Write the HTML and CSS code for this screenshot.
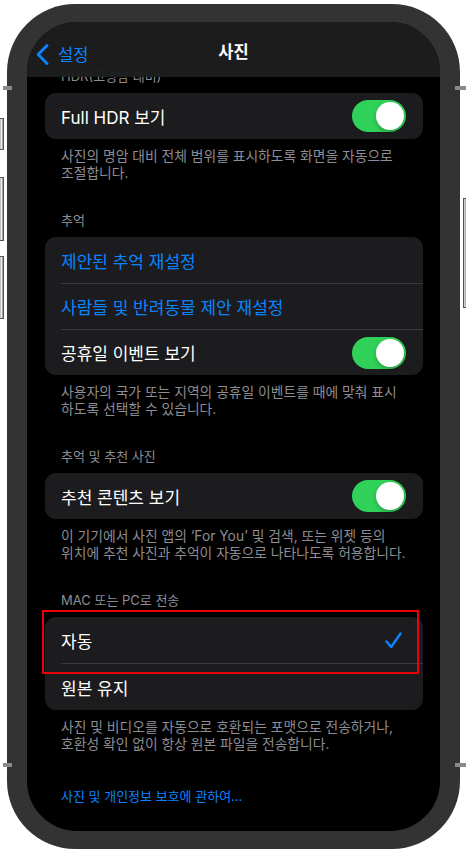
FILE: index.html
```html
<!DOCTYPE html>
<html lang="ko">
<head>
  <meta charset="UTF-8">
  <title>사진 설정</title>
  <link rel="stylesheet" href="styles.css">
</head>
<body>

  <div class="device">
    <!-- side buttons -->
    <span class="btn btn-mute"></span>
    <span class="btn btn-vol-up"></span>
    <span class="btn btn-vol-down"></span>
    <span class="btn btn-power"></span>
    <span class="tick tick-tl"></span>
    <span class="tick tick-tr"></span>
    <span class="tick tick-bl"></span>
    <span class="tick tick-br"></span>

    <div class="screen">
      <div class="navbar">
        <a class="back" href="#">
          <svg width="13" height="21" viewBox="0 0 13 21">
            <path d="M11 1.5 L2.2 10.5 L11 19.5" fill="none" stroke="#0a84ff" stroke-width="2.8" stroke-linecap="round" stroke-linejoin="round"/>
          </svg>
          <span>설정</span>
        </a>
        <div class="title">사진</div>
      </div>

      <div class="content">
        <div class="group-header">HDR(고명암 대비)</div>
        <div class="card">
          <div class="row">
            <div class="row-inner">
              <span>Full HDR 보기</span>
              <span class="toggle on"></span>
            </div>
          </div>
        </div>
        <div class="desc">사진의 명암 대비 전체 범위를 표시하도록 화면을 자동으로<br>조절합니다.</div>

        <div class="group-header">추억</div>
        <div class="card">
          <div class="row">
            <div class="row-inner link-text">제안된 추억 재설정</div>
          </div>
          <div class="row">
            <div class="row-inner link-text">사람들 및 반려동물 제안 재설정</div>
          </div>
          <div class="row">
            <div class="row-inner">
              <span>공휴일 이벤트 보기</span>
              <span class="toggle on"></span>
            </div>
          </div>
        </div>
        <div class="desc">사용자의 국가 또는 지역의 공휴일 이벤트를 때에 맞춰 표시<br>하도록 선택할 수 있습니다.</div>

        <div class="group-header">추억 및 추천 사진</div>
        <div class="card">
          <div class="row">
            <div class="row-inner">
              <span>추천 콘텐츠 보기</span>
              <span class="toggle on"></span>
            </div>
          </div>
        </div>
        <div class="desc">이 기기에서 사진 앱의 ‘For You’ 및 검색, 또는 위젯 등의<br>위치에 추천 사진과 추억이 자동으로 나타나도록 허용합니다.</div>

        <div class="group-header">MAC 또는 PC로 전송</div>
        <div class="card">
          <div class="row">
            <div class="row-inner">
              <span>자동</span>
              <svg class="check" width="17" height="17" viewBox="0 0 17 17">
                <path d="M1.5 9.5 L6.2 15 L15.5 1.5" fill="none" stroke="#0a84ff" stroke-width="2.4" stroke-linecap="round" stroke-linejoin="round"/>
              </svg>
            </div>
          </div>
          <div class="row tall">
            <div class="row-inner">원본 유지</div>
          </div>
          <div class="highlight"></div>
        </div>
        <div class="desc">사진 및 비디오를 자동으로 호환되는 포맷으로 전송하거나,<br>호환성 확인 없이 항상 원본 파일을 전송합니다.</div>

        <a class="footer-link" href="#">사진 및 개인정보 보호에 관하여...</a>
      </div>
    </div>
  </div>

</body>
</html>
```

FILE: styles.css
```css
body {
  margin: 0;
  padding: 0;
  background-color: white;
  font-family: Inter, "Noto Sans CJK KR", sans-serif;
}

.device {
  position: relative;
  width: 453px;
  height: 845px;
  margin: 4px 0 0 7px;
  padding: 18px 20px;
  box-sizing: border-box;
  background-color: #333;
  border-radius: 68px;
}

/* hardware buttons and little marks round the frame */
.btn {
  position: absolute;
  width: 3px;
  border: 1px solid #555;
  border-left: none;
  background: linear-gradient(to right, #aaa, #f2f2f2 50%, #777);
}

.btn-mute { left: -7px; top: 114px; height: 30px; }
.btn-vol-up { left: -7px; top: 173px; height: 62px; }
.btn-vol-down { left: -7px; top: 252px; height: 61px; }
.btn-power { right: -6px; top: 194px; height: 108px; width: 2px; border-right: none; border-left: 1px solid #555; }

.tick {
  position: absolute;
  width: 9px;
  height: 4px;
  background-color: #8a8a8a;
}

.tick-tl { left: -4px; top: 82px; }
.tick-bl { left: -4px; top: 759px; }
.tick-tr { right: -6px; top: 82px; width: 11px; }
.tick-br { right: -6px; top: 759px; width: 11px; }

.screen {
  position: relative;
  height: 809px;
  background-color: #000;
  border-radius: 50px;
  overflow: hidden;
}

.navbar {
  position: absolute;
  top: 0;
  left: 0;
  right: 0;
  height: 55px;
  background-color: rgba(29, 29, 30, 0.96);
  z-index: 2;
}

.back {
  position: absolute;
  left: 9px;
  top: 20px;
  display: flex;
  align-items: center;
  gap: 9px;
  color: #0a84ff;
  text-decoration: none;
  font-size: 16.5px;
}

.title {
  text-align: center;
  line-height: 20px;
  padding-top: 20px;
  color: #fff;
  font-size: 16.5px;
  font-weight: bold;
}

.content {
  padding: 45px 17px 0 18px;
}

.group-header {
  padding-left: 16px;
  margin-bottom: 8px;
  line-height: 18px;
  font-size: 13px;
  color: #8d8d93;
}

.card {
  position: relative;
  background-color: #1c1c1e;
  border-radius: 11px;
}

.row {
  display: flex;
  height: 46px;
  padding-left: 16px;
  color: #fff;
  font-size: 17px;
}

.row.tall {
  height: 47px;
}

.row + .row .row-inner {
  border-top: 1px solid #38383a;
}

.row-inner {
  flex: 1;
  display: flex;
  align-items: center;
  justify-content: space-between;
  padding-right: 17px;
}

.link-text {
  color: #0a84ff;
}

.toggle {
  position: relative;
  width: 54px;
  height: 32px;
  border-radius: 16px;
  background-color: #3a3a3c;
}

.toggle.on {
  background-color: #30d158;
}

.toggle::after {
  content: "";
  position: absolute;
  top: 2px;
  left: 2px;
  width: 28px;
  height: 28px;
  border-radius: 50%;
  background-color: white;
  box-shadow: 0 2px 4px rgba(0, 0, 0, 0.25);
}

.toggle.on::after {
  left: 24px;
}

.check {
  margin-right: 4px;
}

/* red marker drawn over the first row */
.highlight {
  position: absolute;
  left: -3px;
  right: 4px;
  top: -7px;
  height: 60px;
  border: 2px solid #e8000b;
}

.desc {
  padding: 9px 16px 0;
  margin-bottom: 29px;
  line-height: 17px;
  font-size: 13.8px;
  color: #8d8d93;
  white-space: nowrap;
}

.footer-link {
  display: block;
  padding-left: 16px;
  margin-top: 34px;
  line-height: 18px;
  font-size: 13px;
  color: #0a84ff;
  text-decoration: none;
}
```
